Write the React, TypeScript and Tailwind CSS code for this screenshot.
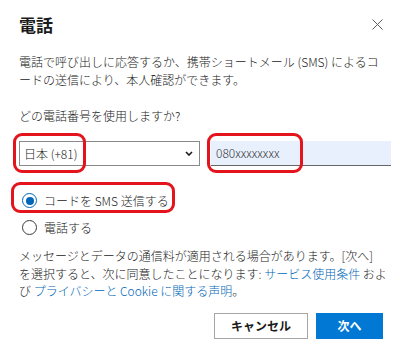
const font = "font-['Noto_Sans_CJK_JP','Noto_Sans',sans-serif]";

function Radio({ checked, label }: { checked?: boolean; label: string }) {
  return (
    <label className="flex h-[27px] items-center">
      <span
        className={`flex h-[15px] w-[15px] items-center justify-center rounded-full border ${
          checked ? "border-[#0067b8]" : "border-[#3b3b3b]"
        } bg-white`}
      >
        {checked ? <span className="h-[8px] w-[8px] rounded-full bg-[#0067b8]" /> : null}
      </span>
      <span className="ml-[7px] text-[12px] font-light leading-none text-[#222]">{label}</span>
    </label>
  );
}

export default function App() {
  return (
    <div className={`relative h-[359px] w-[400px] overflow-hidden bg-white ${font}`}>
      <div className="flex flex-col pl-[19px] pr-[9px]">
        <div className="flex items-start justify-between pt-[14px]">
          <h1 className="text-[17px] font-semibold leading-[22px] text-[#1b1b1b]">電話</h1>
          <svg className="mr-[8px] mt-[5px] h-[11px] w-[11px]" viewBox="0 0 11 11" fill="none" aria-hidden="true">
            <path d="M0.5 0.5l10 10M10.5 0.5l-10 10" stroke="#5a5a5a" strokeWidth="1" />
          </svg>
        </div>

        <p className="mt-[17px] whitespace-nowrap text-[12px] font-light leading-[18px] text-[#222]">
          電話で呼び出しに応答するか、携帯ショートメール (SMS) によるコ
          <br />
          ードの送信により、本人確認ができます。
        </p>

        <p className="mt-[18px] text-[12px] font-light leading-[18px] text-[#222]">どの電話番号を使用しますか?</p>

        <div className="mt-[16px] flex h-[25px] gap-[11px]">
          <div className="flex w-[181px] items-center justify-between border border-[#8a8a8a] bg-white pl-[4px] pr-[6px]">
            <span className="text-[12px] font-light text-[#222]">日本 (+81)</span>
            <svg className="h-[5px] w-[8px]" viewBox="0 0 8 5" fill="none" aria-hidden="true">
              <path d="M1 1l3 3 3-3" stroke="#1b1b1b" strokeWidth="1.6" />
            </svg>
          </div>
          <div className="flex flex-1 items-center border-b border-[#666666] bg-[#e8f0fe] pl-[5px]">
            <span className="text-[12px] font-light text-[#3b3b3b]">080xxxxxxxx</span>
          </div>
        </div>

        <div className="mt-[21px] flex flex-col pl-[3px]">
          <Radio checked label="コードを SMS 送信する" />
          <Radio label="電話する" />
        </div>

        <p className="mt-[6px] whitespace-nowrap text-[12px] font-light leading-[17.5px] text-[#222]">
          メッセージとデータの通信料が適用される場合があります。[次へ]
          <br />
          を選択すると、次に同意したことになります: <span className="text-[#0067b8]">サービス使用条件</span> およ
          <br />
          び <span className="text-[#0067b8]">プライバシーと Cookie に関する声明</span>。
        </p>

        <div className="mt-[13px] flex justify-end gap-[8px] pr-[8px]">
          <button className="h-[26px] w-[94px] border border-[#a6a6a6] bg-white text-[12px] font-semibold text-[#1b1b1b]">
            キャンセル
          </button>
          <button className="h-[26px] w-[67px] bg-[#0078d4] text-[12px] font-semibold text-white">次へ</button>
        </div>
      </div>

      {/* red annotations */}
      <div className="pointer-events-none absolute left-[13px] top-[133px] h-[40px] w-[73px] rounded-[9px] border-[3px] border-[#e3141b]" />
      <div className="pointer-events-none absolute left-[207px] top-[133px] h-[40px] w-[96px] rounded-[9px] border-[3px] border-[#e3141b]" />
      <div className="pointer-events-none absolute left-[11px] top-[182px] h-[31px] w-[164px] rounded-[9px] border-[3px] border-[#e3141b]" />
    </div>
  );
}
